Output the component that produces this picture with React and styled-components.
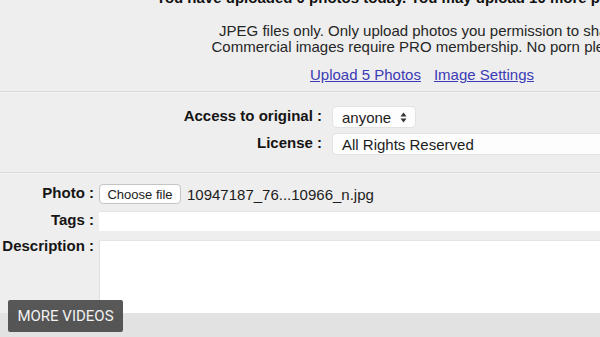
import React from 'react';
import styled, { createGlobalStyle } from 'styled-components';

const GlobalStyle = createGlobalStyle`
  html, body {
    margin: 0;
    padding: 0;
    background: #eeeeee;
    overflow: hidden;
  }
  body {
    font-family: "Liberation Sans", Arial, sans-serif;
    color: #1e1e1e;
  }
`;

export default function App() {
  return (
    <>
      <GlobalStyle />
      <Viewport>
        <Page>
          <Intro>
            <Headline>You have uploaded 0 photos today. You may upload 10 more photos today.</Headline>
            <Notice>
              JPEG files only. Only upload photos you permission to share.
              <br />
              Commercial images require PRO membership. No porn please.
            </Notice>
            <LinkRow>
              <TextLink href="#">Upload 5 Photos</TextLink>
              <TextLink href="#">Image Settings</TextLink>
            </LinkRow>
          </Intro>

          <Settings>
            <Label>Access to original :</Label>
            <SelectBox $width="82px">
              anyone
              <SelectArrows width="7" height="11" viewBox="0 0 7 11">
                <path d="M3.5 0.5 L6.5 4.5 L0.5 4.5 Z" fill="#333" />
                <path d="M3.5 10.5 L6.5 6.5 L0.5 6.5 Z" fill="#333" />
              </SelectArrows>
            </SelectBox>
            <Label>License :</Label>
            <SelectBox $width="400px">All Rights Reserved</SelectBox>
          </Settings>

          <Upload>
            <Label>Photo :</Label>
            <FileRow>
              <FileButton type="button">Choose file</FileButton>
              <FileName>10947187_76...10966_n.jpg</FileName>
            </FileRow>
            <Label>Tags :</Label>
            <TextInput />
            <Label $top>Description :</Label>
            <TextArea />
          </Upload>
          <Footer />
        </Page>
        <MoreVideos>MORE VIDEOS</MoreVideos>
      </Viewport>
    </>
  );
}

const Viewport = styled.div`
  position: relative;
  width: 600px;
  height: 337px;
  overflow: hidden;
`;

const Page = styled.div`
  width: 844px;
`;

const Intro = styled.div`
  text-align: center;
  padding-bottom: 8px;
  border-bottom: 1px solid #d7d7d7;
  box-shadow: 0 1px 0 #f6f6f6;
`;

const Headline = styled.div`
  font-size: 15px;
  font-weight: bold;
  line-height: 16px;
  margin-top: -10px;
  white-space: nowrap;
  color: #111;
`;

const Notice = styled.div`
  margin-top: 17px;
  font-size: 15px;
  line-height: 16px;
  white-space: nowrap;
  color: #262626;
`;

const LinkRow = styled.div`
  margin-top: 12px;
  display: flex;
  justify-content: center;
  gap: 13px;
  font-size: 15px;
  line-height: 16px;
`;

const TextLink = styled.a`
  color: #3b3bb5;
  text-decoration: underline;
`;

const Settings = styled.div`
  display: grid;
  grid-template-columns: 322px 1fr;
  column-gap: 11px;
  row-gap: 7px;
  align-items: center;
  padding: 15px 0 18px;
  border-bottom: 1px solid #d9d9d9;
  box-shadow: 0 1px 0 #f6f6f6;
`;

const Label = styled.div`
  font-size: 15px;
  font-weight: bold;
  line-height: 16px;
  text-align: right;
  white-space: nowrap;
  color: #151515;
  align-self: ${(p) => (p.$top ? 'start' : 'center')};
  margin-top: ${(p) => (p.$top ? '0' : '-2px')};
`;

const SelectBox = styled.div`
  box-sizing: border-box;
  width: ${(p) => p.$width};
  height: 20px;
  display: flex;
  align-items: center;
  justify-content: space-between;
  padding: 0 8px 0 9px;
  background: #fdfdfd;
  border-radius: 4px;
  box-shadow: 0 0 0 1px #e2e2e2;
  font-size: 15px;
  color: #1c1c1c;
`;

const SelectArrows = styled.svg`
  display: block;
`;

const Upload = styled.div`
  display: grid;
  grid-template-columns: 94px 1fr;
  column-gap: 5px;
  row-gap: 7px;
  padding-top: 11px;
`;

const FileRow = styled.div`
  display: flex;
  align-items: center;
  gap: 6px;
`;

const FileButton = styled.button`
  box-sizing: border-box;
  height: 20px;
  width: 82px;
  padding: 0;
  background: #fefefe;
  border: 1px solid #c4c4c4;
  border-radius: 4px;
  font-family: "Liberation Sans", Arial, sans-serif;
  font-size: 13px;
  color: #222;
`;

const FileName = styled.span`
  font-size: 15px;
  color: #1c1c1c;
  white-space: nowrap;
`;

const TextInput = styled.input`
  box-sizing: border-box;
  width: 100%;
  height: 20px;
  margin: 0;
  border: none;
  border-top: 1px solid #e4e4e4;
  background: #ffffff;
`;

const TextArea = styled.textarea`
  box-sizing: border-box;
  display: block;
  width: 100%;
  height: 73px;
  margin: 2px 0 0;
  border: none;
  border-top: 1px solid #e4e4e4;
  border-left: 1px solid #e0e0e0;
  background: #ffffff;
  resize: none;
`;

const Footer = styled.div`
  height: 30px;
  background: #e2e2e2;
`;

const MoreVideos = styled.div`
  position: absolute;
  left: 8px;
  top: 300px;
  width: 115px;
  height: 32px;
  display: flex;
  align-items: center;
  justify-content: center;
  background: rgba(70, 70, 70, 0.9);
  border-radius: 2px;
  font-family: Roboto, "Liberation Sans", sans-serif;
  font-size: 15px;
  color: #f2f2f2;
`;
